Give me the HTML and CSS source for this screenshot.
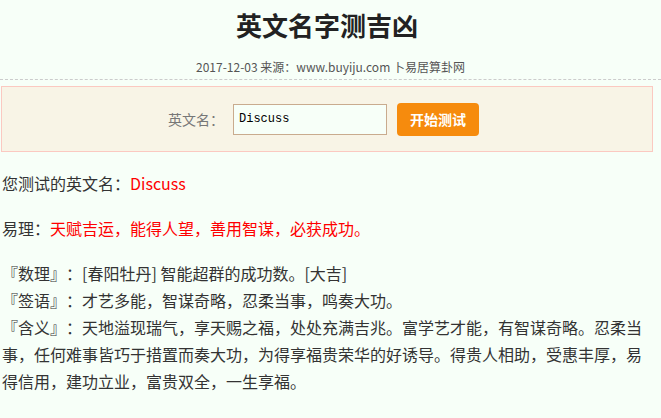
FILE: index.html
```html
<!DOCTYPE html>
<html lang="zh-CN">
<head>
  <meta charset="UTF-8">
  <meta name="viewport" content="width=device-width, initial-scale=1.0">
  <title>英文名字测吉凶</title>
  <link rel="stylesheet" href="styles.css">
</head>
<body>
  <div class="page">
    <h1>英文名字测吉凶</h1>
    <div class="meta">2017-12-03 来源：www.buyiju.com 卜易居算卦网</div>

    <form class="search">
      <label for="name">英文名：</label>
      <input type="text" id="name" value="Discuss">
      <button type="button">开始测试</button>
    </form>

    <div class="result">
      <p>您测试的英文名：<span class="red">Discuss</span></p>
      <p>易理：<span class="red">天赋吉运，能得人望，善用智谋，必获成功。</span></p>
      <p>
        『数理』：[春阳牡丹] 智能超群的成功数。[大吉]<br>
        『签语』：才艺多能，智谋奇略，忍柔当事，鸣奏大功。<br>
        『含义』：天地溢现瑞气，享天赐之福，处处充满吉兆。富学艺才能，有智谋奇略。忍柔当事，任何难事皆巧于措置而奏大功，为得享福贵荣华的好诱导。得贵人相助，受惠丰厚，易得信用，建功立业，富贵双全，一生享福。
      </p>
    </div>
  </div>
</body>
</html>
```

FILE: styles.css
```css
body {
  margin: 0;
  background: #f7fff8;
  font-family: "Noto Sans CJK SC", "Noto Sans", sans-serif;
  color: #333;
  text-spacing-trim: space-all;
}
.page {
  width: 652px;
  margin-left: 1px;
}
h1 {
  margin: 0;
  padding-top: 10px;
  font-size: 26px;
  line-height: 30px;
  text-align: center;
  color: #222;
}
.meta {
  margin-top: 18px;
  padding-bottom: 3px;
  margin-left: -1px;
  width: 661px;
  font-size: 12px;
  line-height: 18px;
  text-align: center;
  color: #555;
  border-bottom: 1px dashed #ccc;
}
.search {
  margin: 6px 0 0;
  padding-right: 7px;
  height: 64px;
  background: #f8f4e6;
  border: 1px solid #fbc9c1;
  display: flex;
  align-items: center;
  justify-content: center;
}
.search label {
  font-size: 14px;
  color: #777;
  margin-right: 9px;
}
.search input {
  width: 154px;
  height: 31px;
  box-sizing: border-box;
  padding: 0 5px;
  border: 1px solid #c9ab8e;
  background: #f7fff8;
  font-family: "Liberation Mono", monospace;
  font-size: 12px;
  color: #000;
}
.search button {
  margin-left: 10px;
  width: 82px;
  height: 33px;
  border: none;
  border-radius: 4px;
  background: #f68b0d;
  color: #fff;
  font-family: "Noto Sans CJK SC", sans-serif;
  font-size: 14px;
  font-weight: bold;
  cursor: pointer;
}
.result {
  padding: 0 1px;
}
.result p {
  margin: 18px 0;
  font-size: 16px;
  line-height: 27px;
}
.red {
  color: #f00;
}
```
